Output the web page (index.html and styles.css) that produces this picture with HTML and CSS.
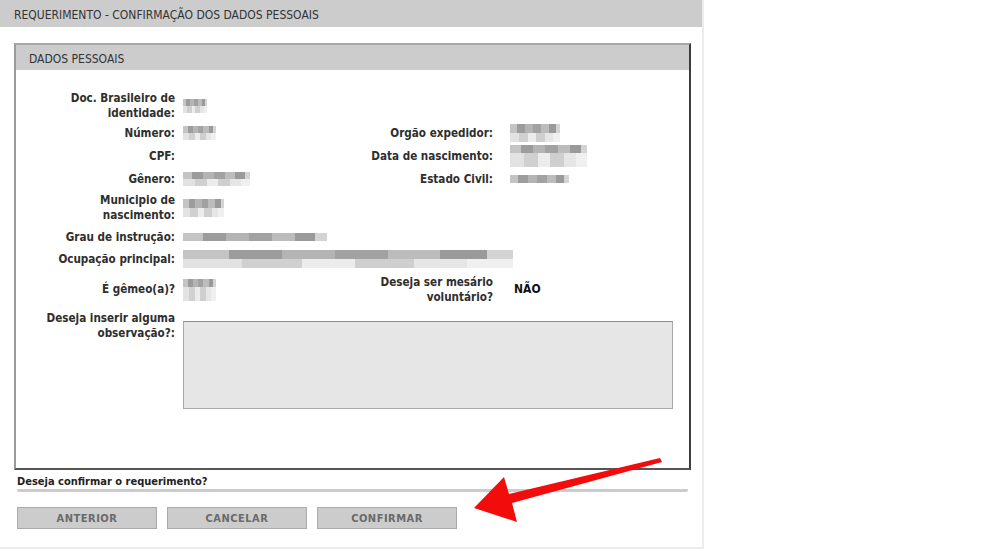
FILE: index.html
```html
<!DOCTYPE html>
<html lang="pt-BR">
<head>
<meta charset="utf-8">
<title>Requerimento - Confirmação dos dados pessoais</title>
<link rel="stylesheet" href="styles.css">
</head>
<body>
<div class="page">
  <div class="titlebar">REQUERIMENTO - CONFIRMAÇÃO DOS DADOS PESSOAIS</div>
  <div class="content">
    <div class="fieldset">
      <div class="legend">DADOS PESSOAIS</div>
      <div class="grid">
        <div class="lbl">Doc. Brasileiro de<br>identidade:</div>
        <div class="val span3"><span class="px w24"></span></div>

        <div class="lbl">Número:</div>
        <div class="val"><span class="px w33"></span></div>
        <div class="lbl2">Orgão expedidor:</div>
        <div class="val2"><span class="px w50 tall"></span></div>

        <div class="lbl">CPF:</div>
        <div class="val"></div>
        <div class="lbl2">Data de nascimento:</div>
        <div class="val2"><span class="px w77 tall3"></span></div>

        <div class="lbl">Gênero:</div>
        <div class="val"><span class="px w67"></span></div>
        <div class="lbl2">Estado Civil:</div>
        <div class="val2"><span class="px w59 thin"></span></div>

        <div class="lbl">Municipio de<br>nascimento:</div>
        <div class="val span3"><span class="px w41 tall"></span></div>

        <div class="lbl">Grau de instrução:</div>
        <div class="val span3"><span class="px w144 thin"></span></div>

        <div class="lbl">Ocupação principal:</div>
        <div class="val span3"><span class="px w330 tall"></span></div>

        <div class="lbl">É gêmeo(a)?</div>
        <div class="val"><span class="px w33 tall3"></span></div>
        <div class="lbl2">Deseja ser mesário<br>voluntário?</div>
        <div class="val2 strong">NÃO</div>

        <div class="lbl top">Deseja inserir alguma<br>observação?:</div>
        <div class="val span3 top"><div class="textarea"></div></div>
      </div>
    </div>
    <div class="confirm">Deseja confirmar o requerimento?</div>
    <div class="buttons">
      <button class="btn" type="button">ANTERIOR</button>
      <button class="btn" type="button">CANCELAR</button>
      <button class="btn" type="button">CONFIRMAR</button>
    </div>
  </div>
</div>
<svg class="arrow" width="984" height="552" viewBox="0 0 984 552" xmlns="http://www.w3.org/2000/svg">
  <polygon points="474,508 504,477 509,494 660,458 662,462 512,503 517,522" fill="#f20c0c"/>
</svg>
</body>
</html>
```
FILE: styles.css
```css
html, body {
  margin: 0;
  padding: 0;
  background: #fff;
}
body {
  position: relative;
  width: 984px;
  height: 552px;
  overflow: hidden;
  font-family: "DejaVu Sans Condensed", "DejaVu Sans", Verdana, sans-serif;
  color: #2a2a2a;
}
.page {
  width: 702px;
  height: 547px;
  border-right: 2px solid #ececec;
  border-bottom: 2px solid #ececec;
}
.titlebar {
  height: 27px;
  background: #cccccc;
  box-sizing: border-box;
  padding-left: 14px;
  line-height: 31px;
  font-size: 12px;
  color: #333;
}
.content {
  padding: 16px 0 0 14px;
}
.fieldset {
  width: 677px;
  height: 427px;
  box-sizing: border-box;
  border-style: solid;
  border-width: 2px 2px 2px 2px;
  border-color: #a8a8a8 #3c3c3c #555 #9a9a9a;
}
.legend {
  height: 25px;
  background: #cccccc;
  padding-left: 13px;
  line-height: 28px;
  font-size: 12px;
  color: #333;
}
.grid {
  display: grid;
  margin: 19px 0 0 24px;
  grid-template-columns: 135px 188px 130px 1fr;
  grid-template-rows: 33px 22px 24px 22px 35px 24px 20px 41px auto;
  align-items: center;
  font-size: 11.6px;
  line-height: 15px;
  font-weight: bold;
}
.lbl, .lbl2 {
  text-align: right;
  color: #2e2e2e;
}
.val {
  padding-left: 8px;
  display: flex;
  align-items: center;
}
.val2 {
  padding-left: 17px;
  display: flex;
  align-items: center;
}
.span3 {
  grid-column: 2 / span 3;
}
.strong {
  padding-left: 21px;
  font-size: 12px;
  color: #111;
}
.top {
  align-self: start;
  padding-top: 1px;
}
.textarea {
  margin-top: 10px;
  width: 488px;
  height: 86px;
  background: #e6e6e6;
  border: 1px solid #a9a9a9;
  border-top-color: #8e8e8e;
}
.px {
  display: inline-block;
  height: 14px;
  filter: blur(0.5px);
  background:
    linear-gradient(90deg, #c4c4c4 0 14%, #9c9c9c 14% 30%, #b4b4b4 30% 46%, #a2a2a2 46% 62%, #bcbcbc 62% 78%, #9a9a9a 78% 92%, #d4d4d4 92%) 0 0 / 100% 7px no-repeat,
    linear-gradient(90deg, #e2e2e2 0 18%, #d0d0d0 18% 36%, #ececec 36% 52%, #cfcfcf 52% 70%, #e6e6e6 70% 86%, #f0f0f0 86%) 0 7px / 100% 7px no-repeat;
}
.px.tall { height: 18px; background-size: 100% 9px; background-position: 0 0, 0 9px; }
.px.tall3 { height: 22px; background-size: 100% 8px, 100% 14px; background-position: 0 0, 0 8px; }
.px.thin { height: 8px; background-size: 100% 8px, 0 0; }
.w24 { width: 24px; }
.w33 { width: 33px; }
.w41 { width: 41px; }
.w50 { width: 50px; }
.w59 { width: 59px; }
.w67 { width: 67px; }
.w77 { width: 77px; }
.w144 { width: 144px; }
.w330 { width: 330px; }
.confirm {
  width: 671px;
  margin: 4px 0 0 3px;
  font-size: 11px;
  font-weight: bold;
  line-height: 15px;
  color: #222;
  border-bottom: 3px solid #cccccc;
  border-radius: 0 0 2px 2px;
}
.buttons {
  display: flex;
  gap: 10px;
  margin: 15px 0 0 3px;
}
.btn {
  width: 140px;
  height: 22px;
  margin: 0;
  padding: 0;
  background: #cccccc;
  border: 1px solid #aaaaaa;
  font-family: "DejaVu Sans Condensed", "DejaVu Sans", Verdana, sans-serif;
  font-size: 11px;
  font-weight: bold;
  letter-spacing: 0.5px;
  color: #6a6a6a;
}
.arrow {
  position: absolute;
  left: 0;
  top: 0;
  pointer-events: none;
}
```
